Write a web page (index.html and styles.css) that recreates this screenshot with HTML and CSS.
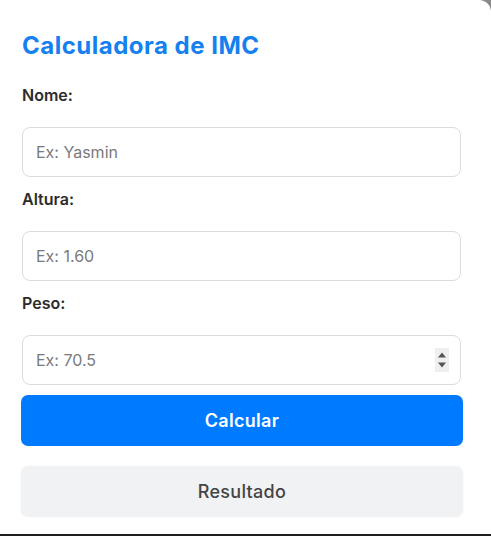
FILE: index.html
```html
<!DOCTYPE html>
<html lang="pt-BR">
<head>
<meta charset="utf-8">
<title>Calculadora de IMC</title>
<link rel="stylesheet" href="styles.css">
</head>
<body>
<main class="card">
  <h1 class="title">Calculadora de IMC</h1>
  <form class="form">
    <label class="label" for="nome">Nome:</label>
    <input class="field" id="nome" type="text" placeholder="Ex: Yasmin">
    <label class="label" for="altura">Altura:</label>
    <input class="field" id="altura" type="text" placeholder="Ex: 1.60">
    <label class="label" for="peso">Peso:</label>
    <div class="field field-number">
      <span class="placeholder">Ex: 70.5</span>
      <span class="spinner">
        <svg width="8" height="6" viewBox="0 0 8 6"><path d="M0 5.5 L4 0.5 L8 5.5 Z" fill="#555"/></svg>
        <svg width="8" height="6" viewBox="0 0 8 6"><path d="M0 0.5 L4 5.5 L8 0.5 Z" fill="#555"/></svg>
      </span>
    </div>
    <button class="btn" type="button">Calcular</button>
    <div class="result">Resultado</div>
  </form>
</main>
<div class="bottom-bar"></div>
</body>
</html>
```

FILE: styles.css
```css
* { box-sizing: border-box; }
html, body { margin: 0; padding: 0; }
body {
  background: #8a8a8a;
  font-family: "Inter", "Noto Sans", sans-serif;
  width: 491px;
  height: 536px;
  overflow: hidden;
}
.card {
  background: #ffffff;
  height: 534px;
  border-top-right-radius: 12px;
  padding: 31px 30px 0 22px;
}
.title {
  margin: 0 0 23px;
  font-size: 24px;
  line-height: 30px;
  font-weight: 700;
  letter-spacing: 0.5px;
  color: #1580f0;
}
.form {
  display: flex;
  flex-direction: column;
}
.label {
  font-size: 16px;
  line-height: 22px;
  font-weight: 600;
  color: #2c2c2c;
  margin-bottom: 21px;
}
.field {
  height: 50px;
  border: 1px solid #dcdcdc;
  border-radius: 8px;
  padding: 0 13px;
  font-family: inherit;
  font-size: 16px;
  color: #333;
  background: #fff;
  margin-bottom: 11px;
  outline: none;
}
.field::placeholder { color: #7a7a7a; }
.field-number {
  display: flex;
  align-items: center;
  justify-content: space-between;
  margin-bottom: 10px;
}
.placeholder { color: #7a7a7a; }
.spinner {
  display: flex;
  flex-direction: column;
  align-items: center;
  justify-content: space-between;
  width: 14px;
  height: 24px;
  padding: 4px 0;
  background: #efefef;
  margin-right: -2px;
}
.btn {
  height: 51px;
  margin: 0 -2px 20px -1px;
  border: none;
  border-radius: 7px;
  background: #007bff;
  color: #ffffff;
  font-family: inherit;
  font-size: 18px;
  font-weight: 600;
  letter-spacing: 0.3px;
}
.result {
  height: 51px;
  margin: 0 -2px 0 -1px;
  border-radius: 7px;
  background: #f1f2f4;
  box-shadow: 0 0 3px rgba(0, 0, 0, 0.04);
  color: #444;
  font-size: 18px;
  font-weight: 500;
  letter-spacing: 0.3px;
  display: flex;
  align-items: center;
  justify-content: center;
}
.bottom-bar {
  height: 2px;
  background: #1e1e1e;
}
```
